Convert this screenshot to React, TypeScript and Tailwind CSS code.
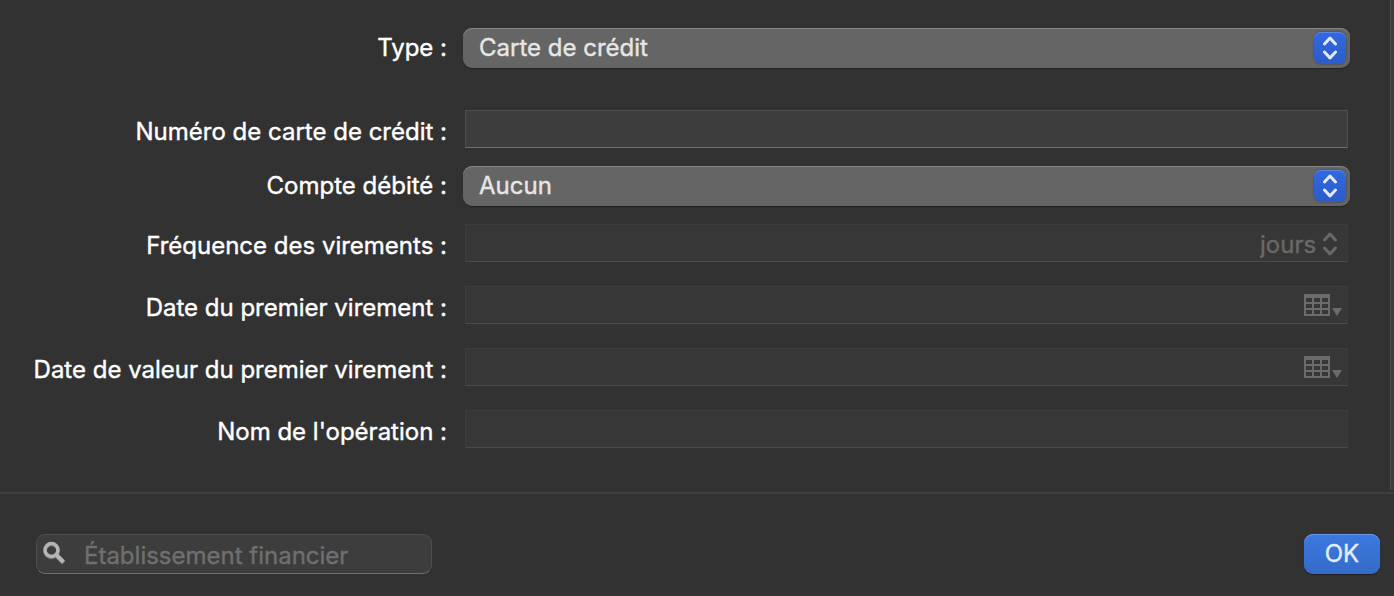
import React from "react";

function UpDown({ className }: { className: string }) {
  return (
    <svg viewBox="0 0 14 24" fill="none" stroke="currentColor" strokeWidth="3" strokeLinecap="round" strokeLinejoin="round" className={className} aria-hidden="true">
      <path d="M1.500 8 L7 2 L12.500 8" />
      <path d="M1.500 16 L7 22 L12.500 16" />
    </svg>
  );
}

function CalendarIcon() {
  return (
    <svg width="40" height="22" viewBox="0 0 40 22" aria-hidden="true" className="block">
      <path
        fill="#6b6b6b"
        fillRule="evenodd"
        d="M0 0H26V22H0Z M2 4V8H8V4Z M10 4V8H16V4Z M18 4V8H24V4Z M2 10V14H8V10Z M10 10V14H16V10Z M18 10V14H24V10Z M2 16V20H8V16Z M10 16V20H16V16Z M18 16V20H24V16Z"
      />
      <path fill="#6b6b6b" d="M28 14H38L33 22Z" />
    </svg>
  );
}

function Row({ id, label, className, tall, children }: { id: string; label: string; className: string; tall?: boolean; children: React.ReactNode }) {
  return (
    <div className={`flex items-start ${tall ? "h-10" : "h-[38px]"} ${className}`}>
      <label htmlFor={id} className={`w-[447px] shrink-0 whitespace-nowrap text-right text-white ${tall ? "leading-10" : "leading-[44px]"}`}>
        {label}
      </label>
      <div className={`min-w-0 flex-1 ${tall ? "ml-4" : "ml-[18px] mr-0.5"}`}>{children}</div>
    </div>
  );
}

function Popup({ id, options }: { id: string; options: string[] }) {
  return (
    <div className="relative">
      <select
        id={id}
        className="block h-10 w-full appearance-none rounded-[9px] bg-[#656565] pl-4 pr-12 text-[#e6e6e6] shadow-[inset_0_1px_0_#858585,0_1px_1px_rgba(0,0,0,0.35)] outline-none"
      >
        {options.map((o) => (
          <option key={o}>{o}</option>
        ))}
      </select>
      <span className="pointer-events-none absolute right-1 top-1 flex size-8 items-center justify-center rounded-[7px] bg-linear-to-b from-[#3268e0] to-[#2b5cc8] text-[#e4eafa] shadow-[inset_0_1px_0_#5b86e4,0_0_2px_rgba(0,0,0,0.45)]">
        <UpDown className="h-6 w-3.5" />
      </span>
    </div>
  );
}

const dimBox = "flex h-[38px] w-full border border-[#3d3d3d] border-b-[#4b4b4b] bg-[#373737]";

function DateBox({ id, label }: { id: string; label: string }) {
  return (
    <div className={dimBox}>
      <input id={id} type="text" disabled className="min-w-0 flex-1 bg-transparent px-2 outline-none" />
      <button type="button" disabled aria-label={label} className="mr-[3px] mt-[7px] h-[22px] w-10">
        <CalendarIcon />
      </button>
    </div>
  );
}

export default function App() {
  return (
    <div className="min-h-screen bg-[#323232] font-['Inter',sans-serif] text-[24px] [-webkit-text-stroke:0.4px]">
      <div className="flex">
        <form className="min-w-0 flex-1 pb-[42px] pr-10 pt-7">
          <Row id="type" label="Type :" tall className="">
            <Popup id="type" options={["Carte de crédit"]} />
          </Row>
          <Row id="number" label="Numéro de carte de crédit :" className="mt-[42px]">
            <input
              id="number"
              type="text"
              className="block h-[38px] w-full border border-[#4e4e4e] border-b-[#6f6f6f] bg-[#3d3d3d] px-2 text-white outline-none"
            />
          </Row>
          <Row id="account" label="Compte débité :" tall className="mt-[18px]">
            <Popup id="account" options={["Aucun"]} />
          </Row>
          <Row id="frequency" label="Fréquence des virements :" className="mt-[18px]">
            <div className={dimBox}>
              <input id="frequency" type="text" disabled className="min-w-0 flex-1 bg-transparent px-2 outline-none" />
              <div className="relative">
                <select disabled aria-label="Unité" className="h-9 appearance-none bg-transparent pr-[30px] pt-0.5 text-[#696969] opacity-100 outline-none">
                  <option>jours</option>
                </select>
                <UpDown className="pointer-events-none absolute right-2.5 top-[7px] h-6 w-3.5 text-[#696969]" />
              </div>
            </div>
          </Row>
          <Row id="first" label="Date du premier virement :" className="mt-6">
            <DateBox id="first" label="Date du premier virement" />
          </Row>
          <Row id="value" label="Date de valeur du premier virement :" className="mt-6">
            <DateBox id="value" label="Date de valeur du premier virement" />
          </Row>
          <Row id="name" label="Nom de l'opération :" className="mt-6">
            <div className={dimBox}>
              <input id="name" type="text" disabled className="min-w-0 flex-1 bg-transparent px-2 outline-none" />
            </div>
          </Row>
        </form>
        <div className="w-1 border-l border-[#4f4f4f] bg-[#3c3c3c]" />
      </div>
      <footer className="mt-0.5 flex items-start justify-between border-t-2 border-[#3e3e3e] pb-[22px] pl-9 pr-3.5 pt-10">
        <label className="flex h-10 w-[396px] items-center rounded-[9px] border border-[#4e4e4e] border-b-[#6f6f6f] bg-[#3d3d3d] pl-1.5">
          <svg width="24" height="24" viewBox="0 0 24 24" fill="none" className="mb-0.5 shrink-0" aria-hidden="true">
            <g stroke="#777777" strokeWidth="3.500">
              <circle cx="8.500" cy="10" r="6.500" />
              <path d="M13 14.500 L20.500 22" strokeWidth="4" />
            </g>
            <g stroke="#b4b4b4" strokeWidth="3.500">
              <circle cx="8.500" cy="9" r="6.500" />
              <path d="M13 13.500 L20.500 21" strokeWidth="4" />
            </g>
          </svg>
          <input
            type="text"
            aria-label="Établissement financier"
            placeholder="Établissement financier"
            className="ml-[17px] min-w-0 flex-1 bg-transparent pt-1 text-white outline-none placeholder:text-[#6f6f6f]"
          />
        </label>
        <button type="button" className="h-10 w-[76px] rounded-[9px] bg-linear-to-b from-[#3c79e0] to-[#336bc8] text-[#e4ecfa] shadow-[inset_0_1px_0_#6a98e8,0_1px_1px_rgba(0,0,0,0.35)]">
          OK
        </button>
      </footer>
    </div>
  );
}
